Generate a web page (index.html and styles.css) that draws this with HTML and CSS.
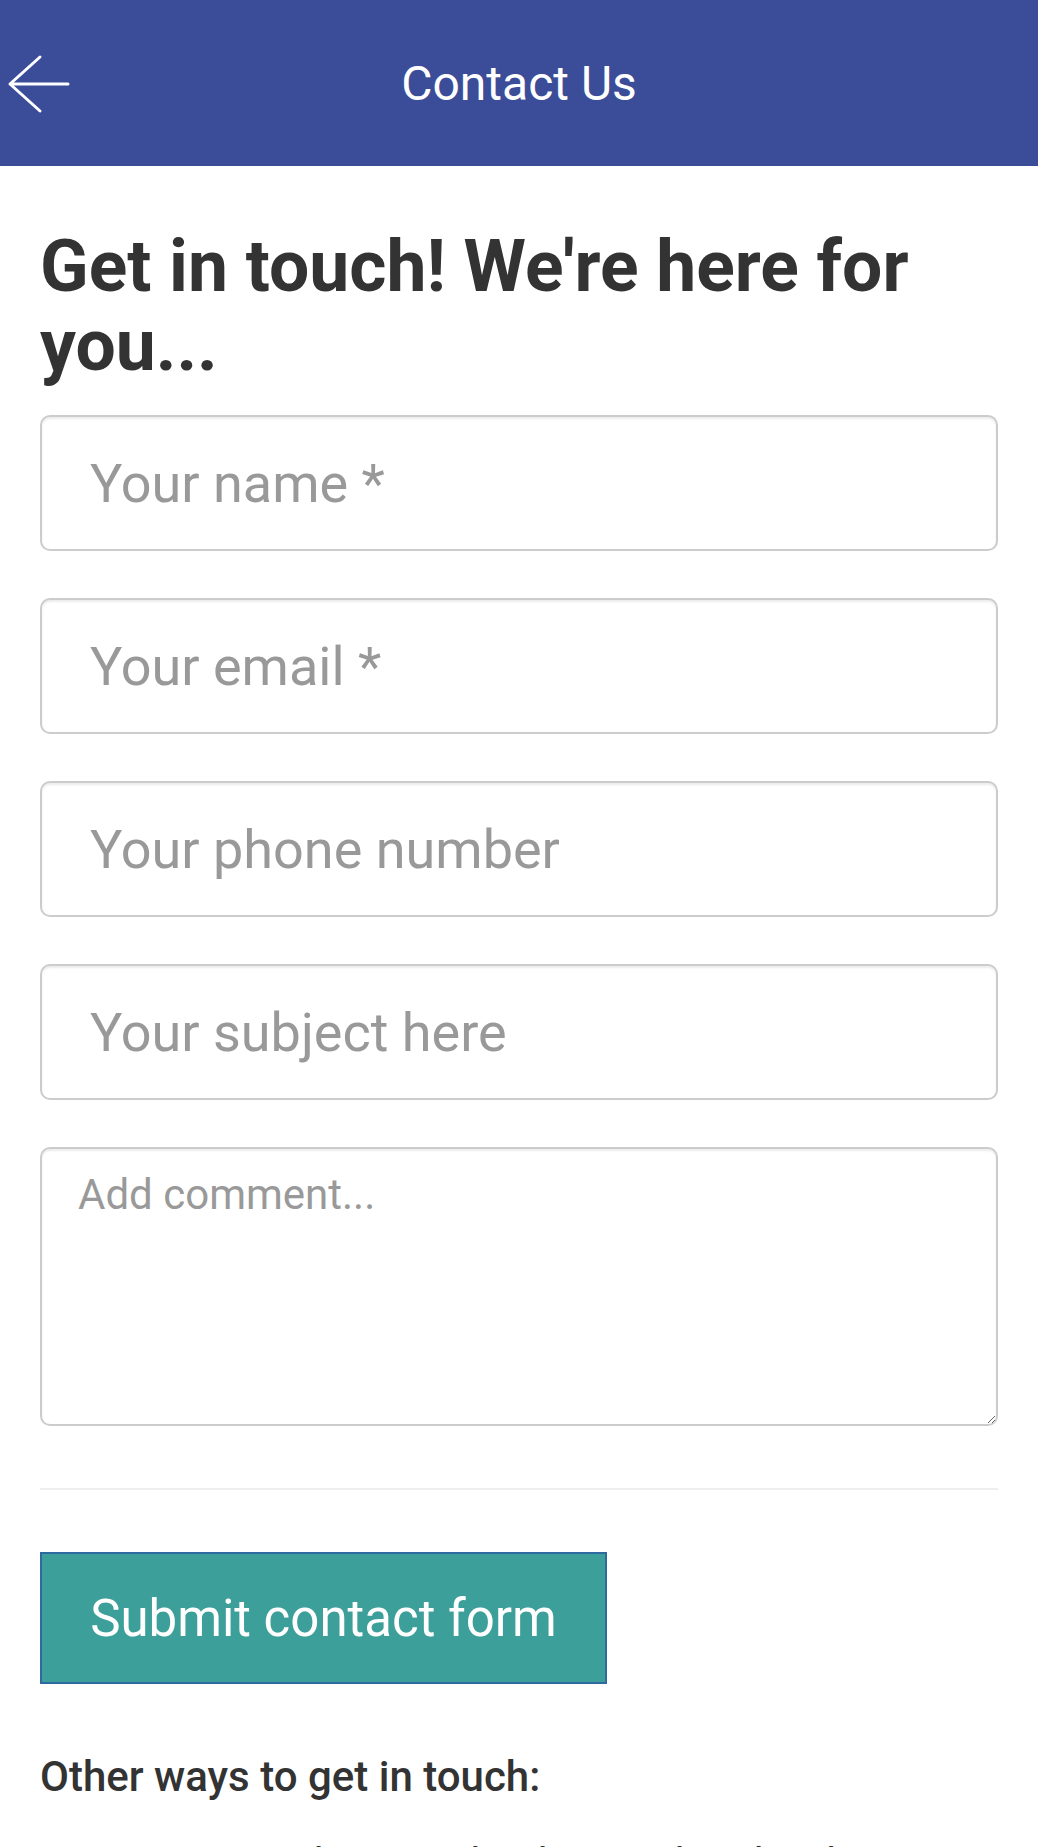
FILE: index.html
```html
<!DOCTYPE html>
<html lang="en">

<head>
    <meta charset="UTF-8">
    <title>Contact Us</title>
    <link rel="stylesheet" href="styles.css">
</head>

<body>
    <header class="topbar">
        <a class="back" href="#">
            <svg width="62" height="62" viewBox="0 0 62 62">
                <path d="M38 4 L8 31 L38 58 M8 31 L66 31" fill="none" stroke="#fff" stroke-width="3" stroke-linecap="round" stroke-linejoin="round"/>
            </svg>
        </a>
        <h1 class="topbar-title">Contact Us</h1>
        <span></span>
    </header>

    <main class="container">
        <h2 class="intro">Get in touch! We're here for you...</h2>

        <form class="contact-form">
            <input class="field" type="text" placeholder="Your name *">
            <input class="field" type="email" placeholder="Your email *">
            <input class="field" type="tel" placeholder="Your phone number">
            <input class="field" type="text" placeholder="Your subject here">
            <textarea class="comment" placeholder="Add comment..."></textarea>
            <hr>
            <button class="submit" type="submit">Submit contact form</button>
        </form>

        <h3 class="other">Other ways to get in touch:</h3>
        <p class="other-text">At any time, ask us to check your details, change your settings or delete your account.</p>
    </main>
</body>

</html>
```

FILE: styles.css
```css
body {
    margin: 0;
    background-color: #fff;
    font-family: Roboto, "Noto Sans", sans-serif;
    color: #333;
}

/* top bar */

.topbar {
    height: 166px;
    background-color: #3b4c98;
    display: grid;
    grid-template-columns: 90px 1fr 90px;
    align-items: center;
}

.back {
    display: flex;
    padding-left: 2px;
    padding-top: 2px;
}

.back svg {
    overflow: visible;
}

.topbar-title {
    margin: 0;
    text-align: center;
    color: #fff;
    font-size: 48px;
    font-weight: 400;
}

/* content */

.container {
    padding: 0 40px;
}

.intro {
    margin: 61px 0 30px;
    font-size: 71.4px;
    line-height: 79px;
    font-weight: 700;
    color: #333;
}

.contact-form {
    display: flex;
    flex-direction: column;
}

.field {
    box-sizing: border-box;
    height: 136px;
    margin: 0 0 47px;
    padding: 0 48px;
    border: 2px solid #ccc;
    border-radius: 10px;
    box-shadow: inset 0 2px 2px rgba(0, 0, 0, .08);
    font-family: Roboto, sans-serif;
    font-size: 54px;
    color: #333;
    outline: none;
}

.field::placeholder,
.comment::placeholder {
    color: #999;
}

.comment {
    box-sizing: border-box;
    height: 279px;
    margin: 0;
    padding: 21px 36px;
    border: 2px solid #ccc;
    border-radius: 10px;
    box-shadow: inset 0 2px 2px rgba(0, 0, 0, .08);
    font-family: Roboto, sans-serif;
    font-size: 42px;
    color: #333;
    outline: none;
}

hr {
    width: 100%;
    margin: 62px 0 62px;
    border: 0;
    border-top: 2px solid #eee;
}

.submit {
    align-self: flex-start;
    box-sizing: border-box;
    width: 567px;
    height: 132px;
    border: 2px solid #2e6aa0;
    background-color: #3c9f99;
    color: #fff;
    font-family: Roboto, sans-serif;
    font-size: 51px;
    padding: 0;
}

.other {
    margin: 68px 0 0;
    font-size: 42px;
    font-weight: 500;
    color: #333;
}

.other-text {
    margin: 33px 0 0;
    font-size: 42px;
    line-height: 60px;
    color: #333;
}
```
